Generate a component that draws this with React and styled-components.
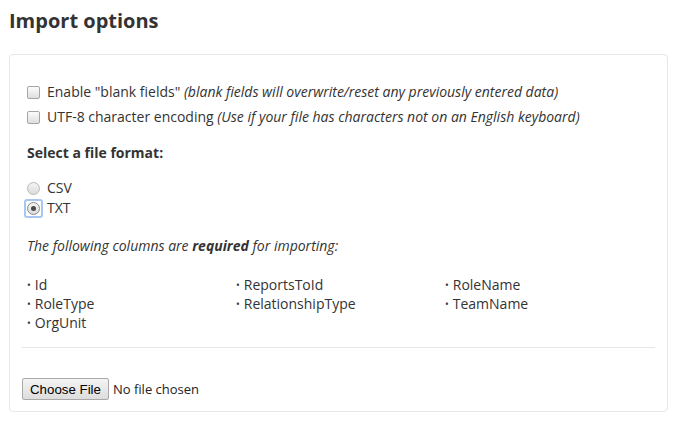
import React from 'react';
import styled, { createGlobalStyle } from 'styled-components';

const GlobalStyle = createGlobalStyle`
  body {
    margin: 0;
    background: #fff;
    font-family: 'Open Sans', 'Liberation Sans', sans-serif;
    font-size: 14px;
    color: #333;
  }
`;

const Page = styled.div`
  padding: 0 13px 0 9px;
`;

const Title = styled.h2`
  margin: 0;
  padding-top: 8px;
  height: 46px;
  font-size: 20px;
  font-weight: 700;
  line-height: 26px;
  color: #333;
`;

const Panel = styled.div`
  border: 1px solid #e6e6e6;
  border-radius: 4px;
  padding: 27px 12px 11px 12px;
`;

const Section = styled.div`
  padding-left: 5px;
`;

const CheckRow = styled.label`
  display: flex;
  align-items: center;
  gap: 7px;
  height: 20px;
  line-height: 20px;
  margin-bottom: ${p => (p.$last ? '16px' : '5px')};
`;

const Box = styled.span`
  width: 11px;
  height: 11px;
  border: 1px solid #a6a6a6;
  border-radius: 2px;
  background: linear-gradient(#fcfcfc, #dedede);
  flex: none;
`;

const Note = styled.i`
  font-style: italic;
`;

const Heading = styled.div`
  font-weight: 700;
  height: 20px;
  line-height: 20px;
  margin-bottom: 15px;
`;

const RadioRow = styled.label`
  display: flex;
  align-items: center;
  gap: 7px;
  height: 20px;
  line-height: 20px;
`;

const Radio = styled.span`
  position: relative;
  width: 11px;
  height: 11px;
  border: 1px solid ${p => (p.$checked ? '#8a8a8a' : '#b8b8b8')};
  border-radius: 50%;
  background: linear-gradient(#f4f4f4, #dcdcdc);
  flex: none;
  ${p => p.$checked && `
    &::before {
      content: '';
      position: absolute;
      left: -4px;
      top: -4px;
      width: 15px;
      height: 15px;
      border: 2px solid #a8c6f2;
      border-radius: 3px;
    }
    &::after {
      content: '';
      position: absolute;
      left: 3px;
      top: 3px;
      width: 5px;
      height: 5px;
      border-radius: 50%;
      background: #4a4a4a;
    }
  `}
`;

const RadioGroup = styled.div`
  margin-bottom: 18px;
`;

const Required = styled.p`
  margin: 0 0 19px;
  font-style: italic;
  height: 20px;
  line-height: 20px;
  b {
    font-weight: 700;
  }
`;

const Columns = styled.ul`
  list-style: none;
  margin: 0;
  padding: 0;
  display: grid;
  grid-template-columns: 209px 209px 1fr;
  margin-bottom: 15px;
`;

const Item = styled.li`
  height: 19px;
  line-height: 19px;
  &::before {
    content: '•';
    font-size: 10px;
    margin-right: 4px;
    position: relative;
    top: -1px;
  }
`;

const Divider = styled.hr`
  border: 0;
  border-top: 1px solid #e6e6e6;
  margin: 0 0 30px;
`;

const FileRow = styled.div`
  display: flex;
  align-items: center;
  gap: 4px;
`;

const FileButton = styled.button`
  height: 22px;
  padding: 0 7px;
  font-family: 'Liberation Sans', Arial, sans-serif;
  font-size: 13.3px;
  color: #000;
  border: 1px solid #a9a9a9;
  border-radius: 2px;
  background: linear-gradient(#f4f4f4, #dddddd);
`;

const FileName = styled.span`
  font-size: 13px;
  color: #222;
`;

const columns = ['Id', 'ReportsToId', 'RoleName', 'RoleType', 'RelationshipType', 'TeamName', 'OrgUnit'];

export default function App() {
  return (
    <Page>
      <GlobalStyle />
      <Title>Import options</Title>
      <Panel>
        <Section>
          <CheckRow>
            <Box />
            <span>
              Enable "blank fields" <Note>(blank fields will overwrite/reset any previously entered data)</Note>
            </span>
          </CheckRow>
          <CheckRow $last>
            <Box />
            <span>
              UTF-8 character encoding <Note>(Use if your file has characters not on an English keyboard)</Note>
            </span>
          </CheckRow>
          <Heading>Select a file format:</Heading>
          <RadioGroup>
            <RadioRow>
              <Radio />
              CSV
            </RadioRow>
            <RadioRow>
              <Radio $checked />
              TXT
            </RadioRow>
          </RadioGroup>
          <Required>
            The following columns are <b>required</b> for importing:
          </Required>
          <Columns>
            {columns.map(c => (
              <Item key={c}>{c}</Item>
            ))}
          </Columns>
        </Section>
        <Divider />
        <FileRow>
          <FileButton type="button">Choose File</FileButton>
          <FileName>No file chosen</FileName>
        </FileRow>
      </Panel>
    </Page>
  );
}
